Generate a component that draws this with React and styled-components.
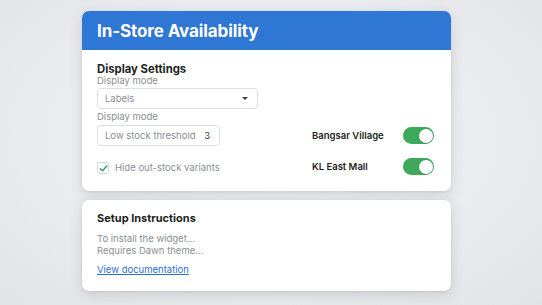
import React from 'react';
import styled, {createGlobalStyle} from 'styled-components';

const GlobalStyle = createGlobalStyle`
  html, body {
    margin: 0;
    padding: 0;
  }

  body {
    width: 542px;
    height: 305px;
    overflow: hidden;
    font-family: Inter, "Noto Sans", sans-serif;
    background: radial-gradient(ellipse at 50% 45%, #f3f4f6 0%, #eaecef 55%, #e1e4e7 100%);
    -webkit-font-smoothing: antialiased;
  }
`;

const Page = styled.div`
  display: flex;
  flex-direction: column;
  gap: 9px;
  padding: 11px 0 0 82px;
`;

const Card = styled.div`
  width: 369px;
  background: #fff;
  border-radius: 7px;
  overflow: hidden;
  box-shadow: 0 4px 14px rgba(40, 50, 60, 0.14), 0 1px 3px rgba(40, 50, 60, 0.08);
`;

const Header = styled.div`
  height: 39px;
  display: flex;
  align-items: center;
  padding: 0 15px;
  background: #2f77d4;
  color: #fff;
  font-size: 17px;
  font-weight: 700;
  letter-spacing: -0.1px;
`;

const Body = styled.div`
  display: grid;
  grid-template-columns: 1fr 122px;
  align-items: center;
  padding: 12px 17px 16px 15px;
`;

const Block = styled.div`
  grid-column: 1 / span 2;
  display: flex;
  flex-direction: column;
`;

const Heading = styled.div`
  font-size: ${p => p.$size || 11}px;
  font-weight: 700;
  line-height: 14px;
  color: #1d1f22;
`;

const Label = styled.div`
  font-size: 9.5px;
  line-height: 12px;
  color: #8b8e93;
  margin-top: ${p => p.$top || 0}px;
`;

const Field = styled.div`
  box-sizing: border-box;
  width: ${p => p.$width}px;
  height: 21px;
  margin-top: ${p => p.$top || 0}px;
  display: flex;
  align-items: center;
  justify-content: space-between;
  padding: 0 9px 0 7px;
  border: 1px solid #dcdfe3;
  border-radius: 4px;
  font-size: 9.5px;
  color: #8b8e93;
  background: #fff;
`;

const Value = styled.span`
  color: #3a3d41;
`;

const Caret = styled.span`
  width: 0;
  height: 0;
  border-left: 3px solid transparent;
  border-right: 3px solid transparent;
  border-top: 3.5px solid #3a3d41;
`;

const CheckRow = styled.label`
  display: flex;
  align-items: center;
  gap: 6px;
  margin-top: 15px;
  font-size: 9.5px;
  line-height: 12px;
  color: #8b8e93;
`;

const CheckBox = styled.span`
  box-sizing: border-box;
  width: 12px;
  height: 12px;
  border: 1px solid #d3d6da;
  border-radius: 2px;
  display: flex;
  align-items: center;
  justify-content: center;
`;

const Store = styled.div`
  display: flex;
  align-items: center;
  justify-content: space-between;
  margin-top: ${p => p.$top || 0}px;
  font-size: 9.5px;
  font-weight: 600;
  color: #1d1f22;
`;

const Toggle = styled.span`
  box-sizing: border-box;
  width: 31px;
  height: 17px;
  border-radius: 9px;
  background: #3ea95a;
  padding: 1.5px;
  display: flex;
  justify-content: ${p => (p.$on ? 'flex-end' : 'flex-start')};

  &::after {
    content: '';
    width: 14px;
    height: 14px;
    border-radius: 50%;
    background: #fff;
    box-shadow: 0 1px 2px rgba(0, 0, 0, 0.15);
  }
`;

const Setup = styled.div`
  padding: 11px 15px 15px;
`;

const Text = styled.div`
  font-size: 9.5px;
  line-height: 11.7px;
  color: #8b8e93;
`;

const Lines = styled.div`
  margin: 8px 0 7.6px;
`;

const Link = styled.a`
  display: block;
  width: max-content;
  font-size: 9.5px;
  line-height: 12px;
  color: #2a6fd0;
  text-decoration: underline;
`;

const stores = ['Bangsar Village', 'KL East Mall'];

export default function App() {
  return (
    <>
      <GlobalStyle/>
      <Page>
        <Card>
          <Header>In-Store Availability</Header>
          <Body>
            <Block>
              <Heading $size={11.3}>Display Settings</Heading>
              <Label $top={-1}>Display mode</Label>
              <Field $width={161} $top={1}>
                Labels
                <Caret/>
              </Field>
              <Label $top={2}>Display mode</Label>
            </Block>
            <Field $width={123} $top={2}>
              Low stock threshold
              <Value>3</Value>
            </Field>
            <Store $top={2}>
              {stores[0]}
              <Toggle $on/>
            </Store>
            <CheckRow>
              <CheckBox>
                <svg width="9" height="9" viewBox="0 0 10 10">
                  <path d="M1.5 5.2 L4 7.6 L8.6 2.2" fill="none" stroke="#2ea44f" strokeWidth="1.6" strokeLinecap="round" strokeLinejoin="round"/>
                </svg>
              </CheckBox>
              Hide out-stock variants
            </CheckRow>
            <Store $top={12}>
              {stores[1]}
              <Toggle $on/>
            </Store>
          </Body>
        </Card>
        <Card>
          <Setup>
            <Heading $size={11}>Setup Instructions</Heading>
            <Lines>
              <Text>To install the widget...</Text>
              <Text>Requires Dawn theme...</Text>
            </Lines>
            <Link href="#">View documentation</Link>
          </Setup>
        </Card>
      </Page>
    </>
  );
}
